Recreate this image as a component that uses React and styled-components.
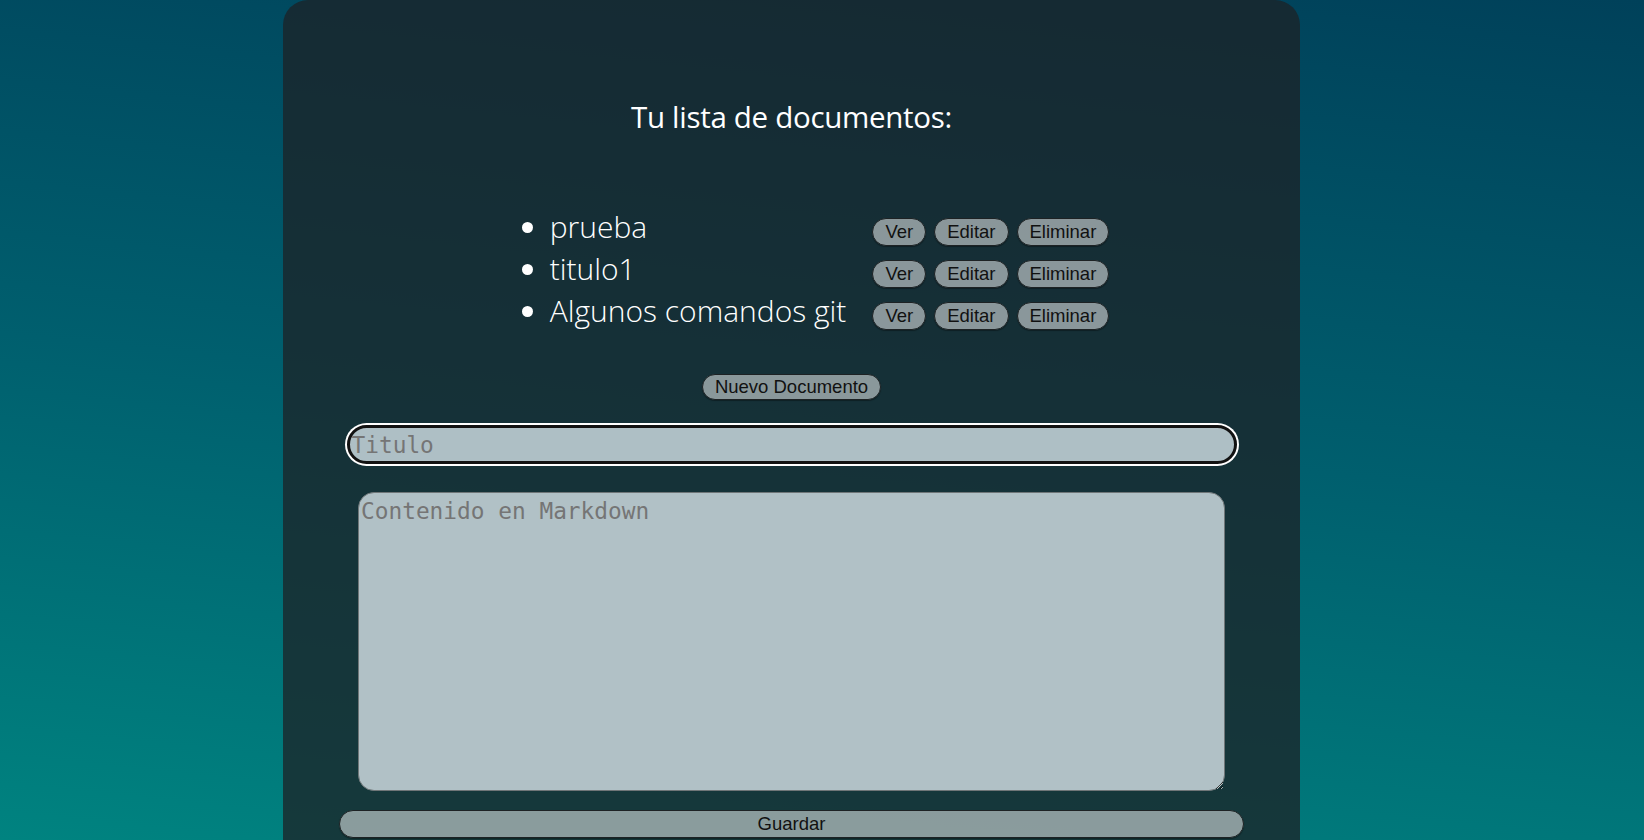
import React from "react";
import styled, { createGlobalStyle } from "styled-components";

const GlobalStyle = createGlobalStyle`
  html, body {
    margin: 0;
    padding: 0;
    height: 100%;
    overflow: hidden;
  }
  body {
    background: linear-gradient(186deg, #00415a 0%, #005f6e 50%, #008380 100%);
    font-family: "Open Sans", "Liberation Sans", sans-serif;
  }
`;

const Page = styled.div`
  height: 100vh;
  padding-left: 283px;
  box-sizing: border-box;
`;

const Panel = styled.main`
  width: 1017px;
  min-height: 900px;
  background: rgba(28, 34, 38, 0.75);
  border-radius: 25px 25px 0 0;
  padding-top: 96px;
  box-sizing: border-box;
  display: flex;
  flex-direction: column;
  align-items: center;
`;

const Title = styled.h2`
  margin: 0;
  font-family: "Open Sans", sans-serif;
  font-weight: 400;
  font-size: 29.5px;
  letter-spacing: -0.3px;
  color: #ffffff;
`;

const DocList = styled.ul`
  list-style: none;
  margin: 69px 0 0 0;
  padding: 0 0 0 48px;
  display: grid;
  grid-template-columns: auto auto;
  column-gap: 26px;
  align-items: baseline;
`;

const DocRow = styled.li`
  display: contents;
`;

const DocName = styled.span`
  font-family: "Open Sans", sans-serif;
  font-weight: 300;
  font-size: 30px;
  line-height: 42px;
  color: #ffffff;
  white-space: nowrap;

  &::before {
    content: "";
    display: inline-block;
    width: 11px;
    height: 11px;
    border-radius: 50%;
    background: #ffffff;
    vertical-align: middle;
    margin-right: 17px;
    position: relative;
    top: -2px;
  }
`;

const Actions = styled.div`
  display: flex;
  align-items: baseline;
  gap: 8px;
`;

const Button = styled.button`
  font-family: "Liberation Sans", Arial, sans-serif;
  font-size: 18.5px;
  line-height: normal;
  color: #111;
  background: rgba(255, 255, 255, 0.5);
  border: 1px solid #1d2224;
  box-shadow: 0 1px 1px rgba(0, 0, 0, 0.35);
  border-radius: 14px;
  padding: ${(p) => (p.$tight ? "1px 12px" : "2px 12px")};
  cursor: pointer;
`;

const NewButton = styled(Button)`
  margin-top: 42px;
`;

const Form = styled.form`
  display: flex;
  flex-direction: column;
  align-items: center;
  margin-top: 25px;
`;

const TitleInput = styled.input`
  box-sizing: border-box;
  width: 890px;
  height: 39px;
  border: 3px solid #121212;
  box-shadow: 0 0 0 2px #ffffff;
  border-radius: 20px;
  background: #aebfc5;
  padding: 0 2px;
  font-family: "DejaVu Sans Mono", monospace;
  font-size: 22.8px;
  color: #222;
  outline: none;

  &::placeholder {
    color: #757575;
  }
`;

const ContentArea = styled.textarea`
  box-sizing: border-box;
  width: 867px;
  height: 299px;
  margin-top: 28px;
  border: 1px solid #6f7678;
  border-radius: 16px;
  background: #b1c1c6;
  padding: 5px 2px;
  font-family: "DejaVu Sans Mono", monospace;
  font-size: 22.8px;
  color: #222;
  outline: none;

  &::placeholder {
    color: #757575;
  }
`;

const SaveButton = styled(Button)`
  width: 905px;
  margin-top: 19px;
  padding: 2px 11px;
`;

const docs = ["prueba", "titulo1", "Algunos comandos git"];

export default function App() {
  return (
    <>
      <GlobalStyle />
      <Page>
        <Panel>
          <Title>Tu lista de documentos:</Title>
          <DocList>
            {docs.map((d) => (
              <DocRow key={d}>
                <DocName>{d}</DocName>
                <Actions>
                  <Button type="button">Ver</Button>
                  <Button type="button">Editar</Button>
                  <Button type="button">Eliminar</Button>
                </Actions>
              </DocRow>
            ))}
          </DocList>
          <NewButton type="button" $tight>
            Nuevo Documento
          </NewButton>
          <Form onSubmit={(e) => e.preventDefault()}>
            <TitleInput placeholder="Titulo" />
            <ContentArea placeholder="Contenido en Markdown" />
            <SaveButton type="submit">Guardar</SaveButton>
          </Form>
        </Panel>
      </Page>
    </>
  );
}
